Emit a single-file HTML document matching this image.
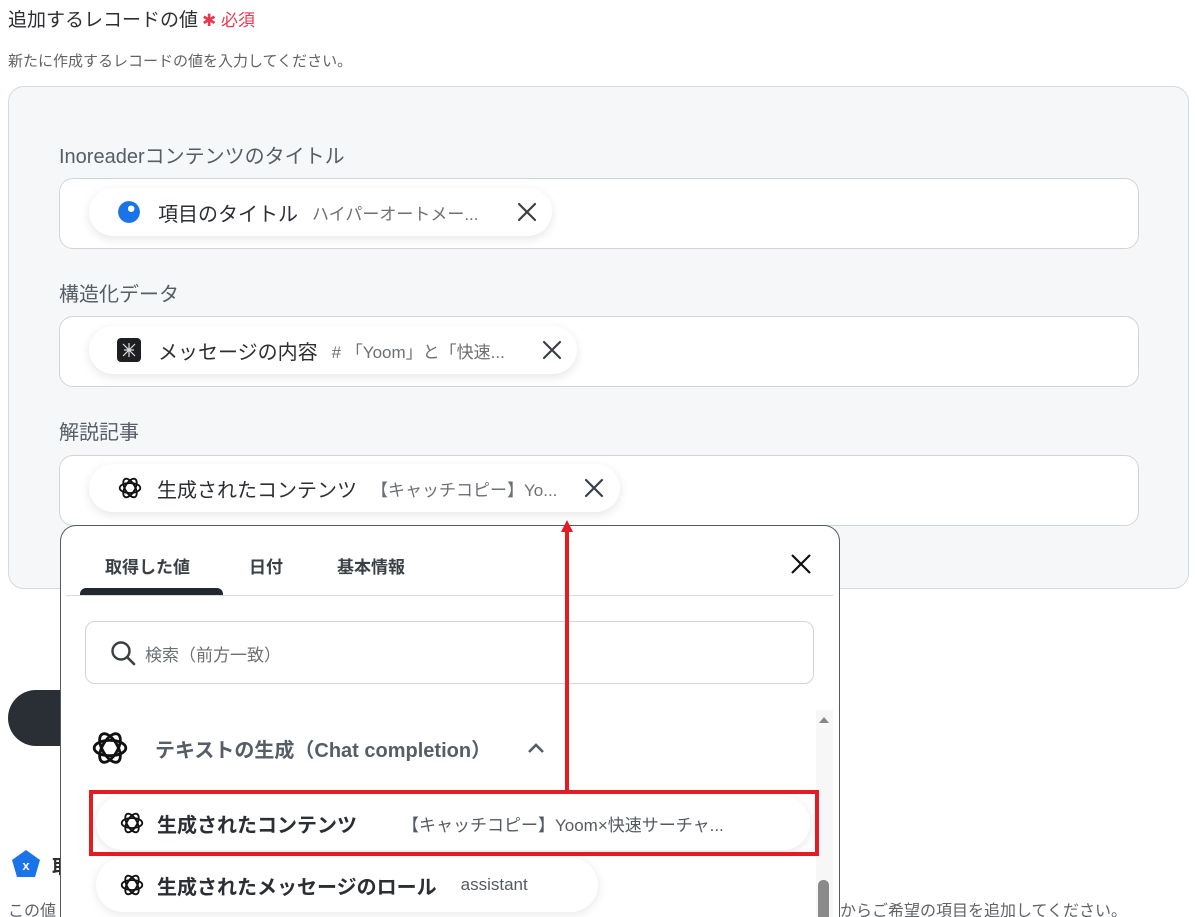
<!DOCTYPE html>
<html style="width:1195px;height:917px;overflow:hidden"><head><meta charset="utf-8">
<style>
*{box-sizing:border-box;margin:0;padding:0}
body{width:1195px;height:917px;overflow:hidden;background:#fff;font-family:"Liberation Sans","Noto Sans CJK JP",sans-serif;position:relative;color:#333}
.abs{position:absolute}
.t1{left:8px;top:5px;font-size:19px;color:#2b2f33}
.t1 span{color:#e8384f;font-size:17px;margin-left:4px}
.sub{left:8px;top:50px;font-size:15px;color:#5f6368}
.panel{left:8px;top:86px;width:1181px;height:503px;background:#f6f7f9;border:1px solid #d5dae0;border-radius:16px}
.lbl{left:59px;font-size:20px;color:#555d66}
.inp{left:59px;width:1080px;height:71px;background:#fff;border:1px solid #d0d5dc;border-radius:14px}
.chip{left:89px;height:48px;background:#fff;border-radius:24px;box-shadow:0 3px 10px rgba(0,0,0,.10);display:flex;align-items:center;padding-left:28px;white-space:nowrap}
.chip .n{font-size:20px;color:#2b2f33;margin-left:17px}
.chip .v{font-size:17px;color:#6b7075;margin-left:14px}
.x{position:absolute;top:14px;width:20px;height:20px}
.pop{left:60px;top:525px;width:780px;height:392px;background:#fff;border:1px solid #555b62;border-bottom:none;border-radius:16px 16px 0 0}
.tab{top:553px;font-size:17px;font-weight:bold;color:#3b4046}
.item{left:96px;height:54px;background:#fff;border-radius:27px;box-shadow:0 2px 10px rgba(0,0,0,.10);display:flex;align-items:center;padding-left:23px;white-space:nowrap}
.item .n{font-size:20px;font-weight:bold;color:#2b2f33;margin-left:12px}
.item .v{font-size:17px;color:#555b62;margin-left:45px}
</style></head><body>
<svg width="0" height="0" style="position:absolute"><defs>
<g id="oa"><g fill="none" stroke="#111" stroke-width="1.7">
<ellipse cx="12" cy="12" rx="9.5" ry="4.6" transform="rotate(0 12 12)"/>
<ellipse cx="12" cy="12" rx="9.5" ry="4.6" transform="rotate(60 12 12)"/>
<ellipse cx="12" cy="12" rx="9.5" ry="4.6" transform="rotate(120 12 12)"/>
</g></g>
<g id="xx"><path d="M2 2L18 18M18 2L2 18" stroke="#3b4046" stroke-width="2.2" stroke-linecap="round"/></g>
</defs></svg>

<div class="abs t1">追加するレコードの値<span>✱ 必須</span></div>
<div class="abs sub">新たに作成するレコードの値を入力してください。</div>

<div class="abs" style="left:8px;top:690px;width:80px;height:56px;background:#2a2f36;border-radius:28px"></div>
<svg class="abs" style="left:10px;top:848px" width="32" height="32" viewBox="0 0 32 32"><path d="M16 2L30 12L25 29H7L2 12Z" fill="#1a73e8"/><text x="16" y="22" font-size="13" font-weight="bold" fill="#fff" text-anchor="middle" font-family="Liberation Sans">x</text></svg>
<div class="abs" style="left:52px;top:852px;font-size:19px;font-weight:bold;color:#2b2f33">取</div>
<div class="abs" style="left:8px;top:897px;font-size:16px;color:#5f6368">この値</div>
<div class="abs" style="left:840px;top:897px;font-size:16px;color:#5f6368;white-space:nowrap">からご希望の項目を追加してください。</div>

<div class="abs panel"></div>
<div class="abs lbl" style="top:140px">Inoreaderコンテンツのタイトル</div>
<div class="abs inp" style="top:178px"></div>
<div class="abs chip" style="top:188px;width:463px">
 <svg width="24" height="24" viewBox="0 0 22 22"><circle cx="11" cy="11" r="10" fill="#1a73e8"/><circle cx="13" cy="8" r="3" fill="#fff"/></svg>
 <span class="n">項目のタイトル</span><span class="v">ハイパーオートメー...</span>
 <svg class="x" style="left:428px" viewBox="0 0 20 20"><use href="#xx"/></svg>
</div>
<div class="abs lbl" style="top:278px">構造化データ</div>
<div class="abs inp" style="top:316px"></div>
<div class="abs chip" style="top:326px;width:488px">
 <svg width="24" height="24" viewBox="0 0 24 24"><rect width="24" height="24" rx="4" fill="#1d1f22"/><path d="M6 6L12 12L18 6M6 18L12 12L18 18M12 5V19M7 12H17" stroke="#ddd" stroke-width="1.2" fill="none"/></svg>
 <span class="n">メッセージの内容</span><span class="v"># 「Yoom」と「快速...</span>
 <svg class="x" style="left:453px" viewBox="0 0 20 20"><use href="#xx"/></svg>
</div>
<div class="abs lbl" style="top:416px">解説記事</div>
<div class="abs inp" style="top:455px"></div>
<div class="abs chip" style="top:464px;width:531px">
 <svg width="26" height="26" viewBox="0 0 24 24"><use href="#oa"/></svg>
 <span class="n" style="margin-left:14px">生成されたコンテンツ</span><span class="v">【キャッチコピー】Yo...</span>
 <svg class="x" style="left:495px" viewBox="0 0 20 20"><use href="#xx"/></svg>
</div>

<div class="abs pop"></div>
<div class="abs tab" style="left:105px">取得した値</div>
<div class="abs tab" style="left:249px">日付</div>
<div class="abs tab" style="left:337px">基本情報</div>
<div class="abs" style="left:80px;top:588px;width:143px;height:7px;background:#23282e;border-radius:6px 6px 0 0"></div>
<div class="abs" style="left:66px;top:595px;width:767px;height:1px;background:#d5dae0"></div>
<svg class="abs" style="left:790px;top:553px" width="22" height="22" viewBox="0 0 22 22"><path d="M2 2L20 20M20 2L2 20" stroke="#111" stroke-width="2.2"/></svg>
<div class="abs" style="left:85px;top:621px;width:729px;height:63px;border:1px solid #d0d5dc;border-radius:10px"></div>
<svg class="abs" style="left:110px;top:640px" width="28" height="28" viewBox="0 0 28 28"><circle cx="11" cy="11" r="8.5" fill="none" stroke="#3b4046" stroke-width="2.4"/><path d="M17 17L24 24" stroke="#3b4046" stroke-width="2.6" stroke-linecap="round"/></svg>
<div class="abs" style="left:145px;top:641px;font-size:17px;color:#6b7075">検索（前方一致）</div>

<div class="abs" style="left:816px;top:710px;width:17px;height:207px;background:#f7f7f7"></div>
<svg class="abs" style="left:817px;top:714px" width="14" height="10"><path d="M2 9L7 3L12 9Z" fill="#888"/></svg>
<div class="abs" style="left:818px;top:880px;width:11px;height:37px;background:#8a8a8a;border-radius:5px 5px 0 0"></div>

<svg class="abs" style="left:90px;top:728px" width="40" height="40" viewBox="0 0 24 24"><use href="#oa"/></svg>
<div class="abs" style="left:155px;top:734px;font-size:20px;font-weight:bold;color:#555d66;white-space:nowrap">テキストの生成（Chat completion）</div>
<svg class="abs" style="left:527px;top:741px" width="18" height="14"><path d="M2 11L9 4L16 11" stroke="#555d66" stroke-width="2.6" fill="none"/></svg>

<div class="abs item" style="top:796px;width:714px">
 <svg width="26" height="26" viewBox="0 0 24 24"><use href="#oa"/></svg>
 <span class="n">生成されたコンテンツ</span><span class="v">【キャッチコピー】Yoom×快速サーチャ...</span>
</div>
<div class="abs" style="left:89px;top:790px;width:730px;height:66px;border:4px solid #e31b23"></div>
<div class="abs item" style="top:858px;width:502px">
 <svg width="26" height="26" viewBox="0 0 24 24"><use href="#oa"/></svg>
 <span class="n">生成されたメッセージのロール</span><span class="v" style="margin-left:24px">assistant</span>
</div>

<div class="abs" style="left:565px;top:530px;width:4px;height:262px;background:#e31b23"></div>
<svg class="abs" style="left:560px;top:519px" width="14" height="14"><path d="M7 1L13 13H1Z" fill="#e31b23"/></svg>
</body></html>
